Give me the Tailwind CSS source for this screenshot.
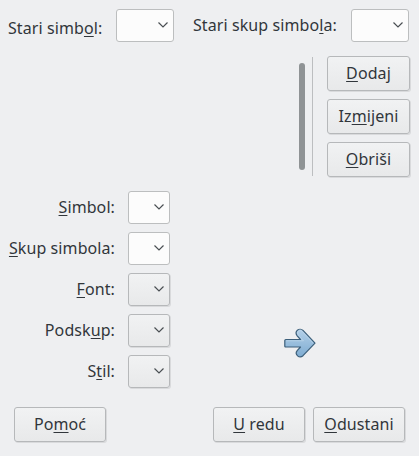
<!DOCTYPE html>
<html lang="hr">
<head>
<meta charset="utf-8">
<title>Simbol</title>
<script src="https://cdn.jsdelivr.net/npm/@tailwindcss/browser@4"></script>
</head>
<body class="w-[419px] h-[456px] overflow-hidden bg-[#eeeff1] text-[#31363b] font-['Noto_Sans',sans-serif] text-[16px] leading-[22px] tracking-[0.09px] whitespace-nowrap [&_u]:decoration-1 [&_u]:underline-offset-2 [&_u]:[text-decoration-skip-ink:none] [&_button]:pb-[2px]">
<svg class="hidden"><symbol id="chev" viewBox="0 0 12 8"><path d="M1.5 1.5 6 6 10.5 1.5" fill="none" stroke="#4a4f53" stroke-width="1.2"/></symbol></svg>
<div class="flex flex-col h-full">
  <div class="flex h-[56px] pt-[9px] pl-2">
    <div class="w-[108px] pt-[8px]">Stari simb<u>o</u>l:</div>
    <div class="w-[58px] h-[33px] rounded-[3px] border border-[#bcbebf] bg-[#fcfcfc] flex items-center justify-end pr-[4px] pb-[1px]"><svg class="w-3 h-2"><use href="#chev"/></svg></div>
    <div class="w-[158px] ml-[19px] pt-[5px]">Stari skup simbo<u>l</u>a:</div>
    <div class="w-[58px] h-[33px] rounded-[3px] border border-[#bcbebf] bg-[#fcfcfc] flex items-center justify-end pr-[4px] pb-[1px]"><svg class="w-3 h-2"><use href="#chev"/></svg></div>
  </div>
  <div class="flex justify-end h-[135px] pr-[9px]">
    <div class="w-[6px] h-[107px] mt-[7px] rounded-full bg-[#8f9395]"></div>
    <div class="w-px h-[119px] mt-px ml-[7px] bg-[#bcbec0]"></div>
    <div class="flex flex-col gap-[8px] ml-[14px]">
      <button class="w-[83px] h-[35px] rounded-[3px] border border-[#b6b8ba] bg-linear-to-b from-[#f1f2f3] to-[#e8e9ea] shadow-[1px_1px_0_#d9dadc]"><u>D</u>odaj</button>
      <button class="w-[83px] h-[35px] rounded-[3px] border border-[#b6b8ba] bg-linear-to-b from-[#f1f2f3] to-[#e8e9ea] shadow-[1px_1px_0_#d9dadc]">Iz<u>m</u>ijeni</button>
      <button class="w-[83px] h-[35px] rounded-[3px] border border-[#b6b8ba] bg-linear-to-b from-[#f1f2f3] to-[#e8e9ea] shadow-[1px_1px_0_#d9dadc]"><u>O</u>briši</button>
    </div>
  </div>
  <div class="flex h-[216px]">
    <div class="grid grid-cols-[115px_42px] auto-rows-[33px] gap-x-[13px] gap-y-[8px] items-center content-start">
      <div class="text-right pb-[2px]"><u>S</u>imbol:</div>
      <div class="h-[33px] rounded-[3px] border border-[#bcbebf] bg-[#fcfcfc] flex items-center justify-end pr-[4px] pb-[1px]"><svg class="w-3 h-2"><use href="#chev"/></svg></div>
      <div class="text-right pb-[2px]"><u>S</u>kup simbola:</div>
      <div class="h-[33px] rounded-[3px] border border-[#bcbebf] bg-[#fcfcfc] flex items-center justify-end pr-[4px] pb-[1px]"><svg class="w-3 h-2"><use href="#chev"/></svg></div>
      <div class="text-right pb-[2px]"><u>F</u>ont:</div>
      <div class="h-[33px] rounded-[3px] border border-[#b6b8ba] bg-linear-to-b from-[#f1f2f3] to-[#e8e9ea] shadow-[1px_1px_0_#d9dadc] flex items-center justify-end pr-[4px] pb-[1px]"><svg class="w-3 h-2"><use href="#chev"/></svg></div>
      <div class="text-right pb-[2px]">Podsk<u>u</u>p:</div>
      <div class="h-[33px] rounded-[3px] border border-[#b6b8ba] bg-linear-to-b from-[#f1f2f3] to-[#e8e9ea] shadow-[1px_1px_0_#d9dadc] flex items-center justify-end pr-[4px] pb-[1px]"><svg class="w-3 h-2"><use href="#chev"/></svg></div>
      <div class="text-right pb-[2px]">S<u>t</u>il:</div>
      <div class="h-[33px] rounded-[3px] border border-[#b6b8ba] bg-linear-to-b from-[#f1f2f3] to-[#e8e9ea] shadow-[1px_1px_0_#d9dadc] flex items-center justify-end pr-[4px] pb-[1px]"><svg class="w-3 h-2"><use href="#chev"/></svg></div>
    </div>
    <svg class="w-8 h-8 ml-[114px] mt-[136px]" viewBox="0 0 32 32">
      <defs><linearGradient id="g" x1="0" y1="0" x2="0" y2="1"><stop offset="0" stop-color="#b4d0e8"/><stop offset="1" stop-color="#7eacd2"/></linearGradient></defs>
      <path d="M1.8 12.5H16.5L13.2 8.8C11.6 6.8 12.2 4.4 13.4 3.2C15 1.8 17.6 2 19 3.4L31 16.2L19 28.7C17.4 30.2 15.2 30.2 13.6 28.9C12.2 27.6 11.8 25.4 13.2 23.7L16.5 20H1.8Q.8 20 .8 19V13.5Q.8 12.5 1.8 12.5Z" fill="url(#g)" stroke="#3c5f7a" stroke-width="1.2" stroke-linejoin="round"/>
      <path d="M2.3 13.8H19.5L14.3 8C13.3 6.5 13.4 5 14.4 4.1C15.6 3.2 17.2 3.4 18.1 4.3L29.2 16.2" fill="none" stroke="#c4dbed" stroke-width="1" opacity=".6"/>
    </svg>
  </div>
  <div class="flex pl-[14px]">
    <button class="w-[92px] h-[35px] rounded-[3px] border border-[#b6b8ba] bg-linear-to-b from-[#f1f2f3] to-[#e8e9ea] shadow-[1px_1px_0_#d9dadc]">Po<u>m</u>oć</button>
    <button class="w-[92px] h-[35px] ml-[107px] rounded-[3px] border border-[#b6b8ba] bg-linear-to-b from-[#f1f2f3] to-[#e8e9ea] shadow-[1px_1px_0_#d9dadc]"><u>U</u> redu</button>
    <button class="w-[92px] h-[35px] ml-2 rounded-[3px] border border-[#b6b8ba] bg-linear-to-b from-[#f1f2f3] to-[#e8e9ea] shadow-[1px_1px_0_#d9dadc]"><u>O</u>dustani</button>
  </div>
</div>
</body>
</html>
